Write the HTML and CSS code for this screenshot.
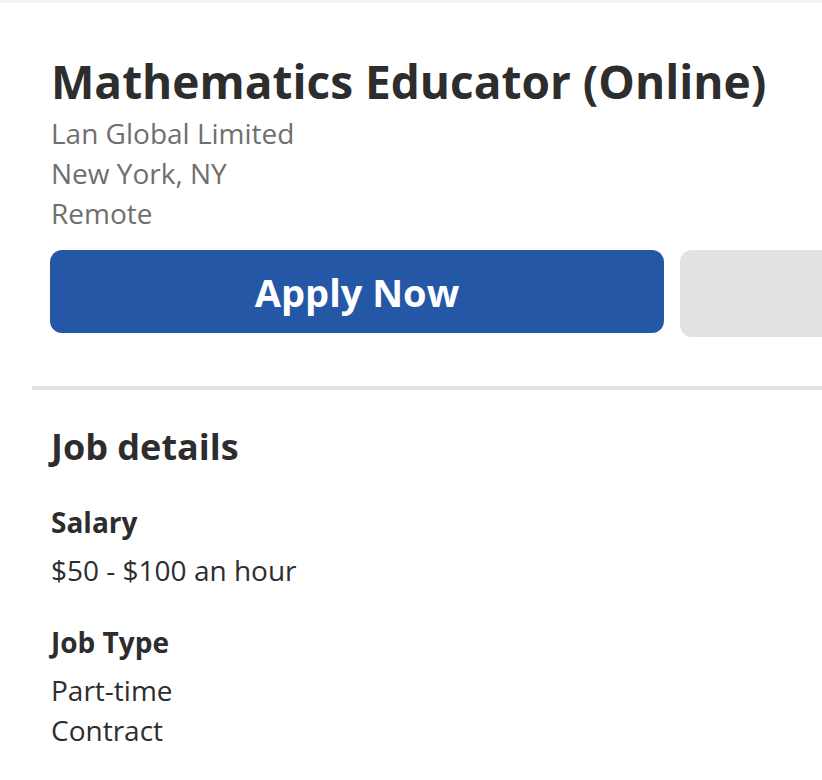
FILE: index.html
```html
<!DOCTYPE html>
<html>
<head>
<meta charset="utf-8">
<link rel="stylesheet" href="styles.css">
</head>
<body>
<div class="page">
  <header class="header">
    <h1 class="title">Mathematics Educator (Online)</h1>
    <div class="meta">
      <div>Lan Global Limited</div>
      <div>New York, NY</div>
      <div>Remote</div>
    </div>
    <div class="actions">
      <button class="apply">Apply Now</button>
      <button class="save"></button>
    </div>
  </header>
  <hr class="divider">
  <section class="details">
    <h2 class="details-title">Job details</h2>
    <div class="group">
      <h3 class="label">Salary</h3>
      <div class="value">$50 - $100 an hour</div>
    </div>
    <div class="group">
      <h3 class="label">Job Type</h3>
      <div class="value">Part-time</div>
      <div class="value">Contract</div>
    </div>
  </section>
</div>
</body>
</html>
```

FILE: styles.css
```css
html, body {
  margin: 0;
  padding: 0;
  background: #fff;
}
body {
  font-family: "Open Sans", "Noto Sans", sans-serif;
  color: #2d2d2d;
  overflow: hidden;
  border-top: 3px solid #f3f3f3;
}
.page {
  width: 822px;
  overflow: hidden;
}
.header {
  padding: 46px 0 0 50px;
}
.title {
  margin: 0 0 0 1px;
  font-size: 46px;
  font-weight: 700;
  line-height: 64px;
  color: #2d2d2d;
}
.meta {
  margin: 0 0 0 1px;
  font-size: 28px;
  line-height: 40px;
  color: #6f6f6f;
}
.actions {
  display: flex;
  gap: 16px;
  margin-top: 17px;
  align-items: flex-start;
}
.apply {
  width: 614px;
  height: 83px;
  border: none;
  border-radius: 12px;
  background: #2557a7;
  color: #fff;
  font-family: inherit;
  font-size: 38px;
  font-weight: 700;
  flex: none;
  padding: 0;
}
.save {
  width: 200px;
  height: 87px;
  border: none;
  border-radius: 12px;
  background: #e4e2e0;
  flex: none;
}
.divider {
  margin: 49px 0 0 32px;
  border: none;
  height: 4px;
  background: #e4e2e0;
}
.details {
  padding: 33px 0 0 50px;
}
.details-title {
  margin: 0 0 0 1px;
  font-size: 36px;
  font-weight: 700;
  line-height: 48px;
}
.group {
  margin-top: 31px;
}
.group + .group {
  margin-top: 32px;
}
.label {
  margin: 0 0 8px 1px;
  font-size: 28px;
  font-weight: 700;
  line-height: 40px;
}
.value {
  margin-left: 1px;
  font-size: 28px;
  line-height: 40px;
}
```
